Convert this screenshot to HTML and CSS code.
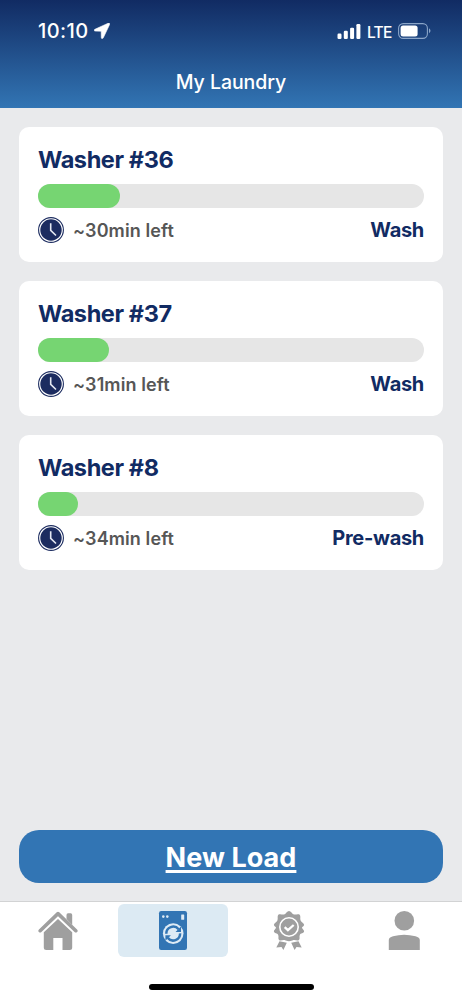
FILE: index.html
```html
<!DOCTYPE html>
<html lang="en">
<head>
<meta charset="utf-8">
<title>My Laundry</title>
<link rel="stylesheet" href="styles.css">
</head>
<body>
<svg class="defs" aria-hidden="true">
  <symbol id="clock" viewBox="0 0 26 26">
    <circle cx="13" cy="13" r="12.4" fill="#fff" stroke="#1c2c60" stroke-width="1.1"/>
    <circle cx="13" cy="13" r="10.7" fill="#1c2c60"/>
    <path d="M12.7 6.2v7.1l5.3 5.2" fill="none" stroke="#e4e8f2" stroke-width="1.6"/>
  </symbol>
</svg>
<div class="screen">
  <header class="header">
    <div class="status">
      <span class="time">10:10</span>
      <svg class="location" width="16" height="16" viewBox="0 0 16 16"><path d="M14.2.2.9 6.3C-.3 6.9-.1 8.1 1.2 8.1L7.200 8.200 7.300 14.400C7.300 15.900 8.700 16 9.300 14.800L15.600 1.500C16 .5 15.200-.2 14.200.2Z" fill="#fff" stroke="#fff" stroke-width=".6"/></svg>
      <svg class="signal" width="24" height="15" viewBox="0 0 24 15" fill="#fff"><rect x="0.500" y="9.500" width="4" height="5.500" rx="1.200"/><rect x="6.800" y="6.800" width="4" height="8.200" rx="1.200"/><rect x="13.100" y="3.700" width="4" height="11.300" rx="1.200"/><rect x="19.400" y="0" width="4" height="15" rx="1.200"/></svg>
      <span class="network">LTE</span>
      <svg class="battery" width="33" height="16" viewBox="0 0 33 16"><rect x=".6" y=".6" width="28.800" height="14.800" rx="4.600" fill="none" stroke="#8aa5c8" stroke-width="1.100"/><rect x="2.600" y="2.500" width="17" height="11" rx="2.500" fill="#fff"/><path d="M31 5.300q3 2.500 0 5z" fill="#8aa5c8"/></svg>
    </div>
    <h1 class="title">My Laundry</h1>
  </header>
  <main class="loads">
    <section class="card">
      <h2 class="machine">Washer #36</h2>
      <div class="track"><div class="fill" style="width:82px"></div></div>
      <div class="info"><svg class="clock"><use href="#clock"/></svg><span class="left">~30min left</span><span class="stage">Wash</span></div>
    </section>
    <section class="card">
      <h2 class="machine">Washer #37</h2>
      <div class="track"><div class="fill" style="width:71px"></div></div>
      <div class="info"><svg class="clock"><use href="#clock"/></svg><span class="left">~31min left</span><span class="stage">Wash</span></div>
    </section>
    <section class="card">
      <h2 class="machine">Washer #8</h2>
      <div class="track"><div class="fill" style="width:40px"></div></div>
      <div class="info"><svg class="clock"><use href="#clock"/></svg><span class="left">~34min left</span><span class="stage">Pre-wash</span></div>
    </section>
    <button class="new-load"><span class="new-load-label">New Load</span></button>
  </main>
  <footer class="footer">
    <nav class="tabs">
      <a class="tab"><svg width="40" height="40" viewBox="0 0 40 40"><path d="M28.500 8V4q0-1.700 1.500-1.700h2.700q1.500 0 1.500 1.700V14z" fill="#9f9f9f"/><path d="M2.200 19.700 20 2.600l17.800 17.100" fill="none" stroke="#9f9f9f" stroke-width="3.600" stroke-linecap="round" stroke-linejoin="round"/><path d="M20 8 34.200 21.300V36.500q0 2.500-2.500 2.500H24.500V27H15.300V39H8.300q-2.500 0-2.500-2.500V21.300z" fill="#9f9f9f"/></svg></a>
      <a class="tab active"><svg width="40" height="40" viewBox="0 0 40 40"><rect x="6" y="0" width="28" height="39" rx="2.200" fill="#3275b4"/><circle cx="10.300" cy="5.600" r="1.300" fill="#deebf5"/><circle cx="14.300" cy="5.600" r="1.300" fill="#deebf5"/><rect x="28.200" y="3.500" width="3" height="5.300" rx=".5" fill="#deebf5"/><circle cx="20.200" cy="22.600" r="10.300" fill="#deebf5"/><path d="M13.300 22.800A6.900 6.900 0 0 1 25.600 18.300M27.100 22.400A6.900 6.900 0 0 1 14.800 26.900" fill="none" stroke="#3275b4" stroke-width="2.500"/><path d="M22.500 21h5.500v-5.500zM17.900 24.200h-5.500v5.500z" fill="#3275b4"/></svg></a>
      <a class="tab"><svg width="40" height="40" viewBox="0 0 40 40"><path d="M10.500 30.300 17.800 31.800 14.400 38.900 12.500 36 7.300 36.500ZM29.500 30.300 22.200 31.800 25.600 38.900 27.500 36 32.700 36.500Z" fill="#9f9f9f"/><path d="M20 0c2 0 2.700 2.500 4.400 3.200 1.700.7 5-.8 6.300.5s.1 4 .9 5.700 3.500 2.600 3.500 4.400-2.100 1.900-2.100 3 2.400 2.200 2.100 3.800c-.4 2-3.500 1.600-4.300 3.300s.5 3.700-.9 5-3.800-.4-5.500.2S22 30.300 20 30.300 17.300 29.700 15.600 29.100 11.500 30.200 10.100 28.900s-.1-3.300-.9-5-3.900-1.300-4.300-3.300c-.3-1.600 2.100-2.700 2.100-3.800s-2.100-1.200-2.100-3S7.600 11.100 8.400 9.400 8 5 9.300 3.700s4.600.2 6.300-.5S18 0 20 0Z" fill="#9f9f9f"/><circle cx="20" cy="16" r="9.200" fill="none" stroke="#fff" stroke-width="1.600"/><path d="m15.700 16.200 3.200 3 5.800-5.200" fill="none" stroke="#fff" stroke-width="2.300"/></svg></a>
      <a class="tab"><svg width="40" height="40" viewBox="0 0 40 40" fill="#9f9f9f"><circle cx="20.300" cy="9.800" r="9.800"/><path d="M4.800 39V29Q4.800 26.500 9 25.300 20 22.100 31.500 25.300 35.800 26.500 35.800 29V39Z"/></svg></a>
    </nav>
    <div class="home-indicator"></div>
  </footer>
</div>
</body>
</html>
```

FILE: styles.css
```css
* { box-sizing: border-box; }

body {
  margin: 0;
  font-family: Inter, "Liberation Sans", sans-serif;
}

.defs { display: none; }

.screen {
  width: 462px;
  height: 1000px;
  display: flex;
  flex-direction: column;
  background: #e9eaec;
}

.header {
  height: 108px;
  background: linear-gradient(#112b63, #3275b4);
  color: #fff;
}

.status {
  height: 62px;
  padding: 0 31px 0 38px;
  display: flex;
  align-items: center;
}

.time {
  width: 50px;
  font-size: 20px;
  font-weight: 500;
  letter-spacing: 0.4px;
  white-space: nowrap;
}

.location { margin-left: 6px; }
.signal { margin-left: auto; }

.network {
  width: 24px;
  margin: 2px 7px 0 6px;
  font-size: 15.5px;
  font-weight: 500;
  letter-spacing: -0.7px;
}

.title {
  margin: 0;
  line-height: 40px;
  text-align: center;
  font-size: 19.5px;
  font-weight: 550;
  letter-spacing: -0.05px;
}

.loads {
  flex: 1;
  padding: 19px 19px 18px;
  display: flex;
  flex-direction: column;
  gap: 19px;
}

.card {
  height: 135px;
  padding: 18px 19px 0;
  border-radius: 10px;
  background: #fff;
}

.machine {
  margin: 0;
  line-height: 30px;
  font-size: 23.5px;
  font-weight: 650;
  letter-spacing: -0.4px;
  color: #112b63;
}

.track {
  height: 24px;
  margin-top: 8.5px;
  border-radius: 12px;
  background: #e6e6e6;
}

.fill {
  height: 100%;
  border-radius: 12px;
  background: #76d572;
}

.info {
  height: 26px;
  margin-top: 9.5px;
  display: flex;
  align-items: center;
}

.clock { width: 26px; height: 26px; }

.left {
  margin-left: 9px;
  font-size: 18px;
  font-weight: 620;
  letter-spacing: 0.1px;
  color: #565656;
}

.stage {
  margin-left: auto;
  font-size: 20px;
  font-weight: 650;
  letter-spacing: -0.3px;
  color: #112b63;
}

.new-load {
  height: 53px;
  margin-top: auto;
  padding: 2px 0 0;
  border: 0;
  border-radius: 20px;
  background: #3275b4;
  color: #fff;
  font: 700 27px/51px Inter, "Liberation Sans", sans-serif;
}

.new-load-label {
  display: inline-block;
  height: 33px;
  line-height: 33px;
  letter-spacing: 0.05px;
  text-decoration: underline;
  text-decoration-thickness: 2.5px;
  text-underline-offset: 3px;
  text-decoration-skip-ink: none;
}

.footer {
  height: 99px;
  border-top: 1px solid #d2d3d4;
  background: #fff;
}

.tabs {
  height: 56px;
  padding-top: 2px;
  display: grid;
  grid-template-columns: repeat(4, 1fr);
  justify-items: center;
}

.tab {
  width: 110px;
  height: 53px;
  border-radius: 6px;
  display: flex;
  align-items: center;
  justify-content: center;
}

.tab.active { background: #dceaf3; }

.home-indicator {
  width: 165px;
  height: 6px;
  margin: 26px auto 0;
  border-radius: 3px;
  background: #000;
}
```
